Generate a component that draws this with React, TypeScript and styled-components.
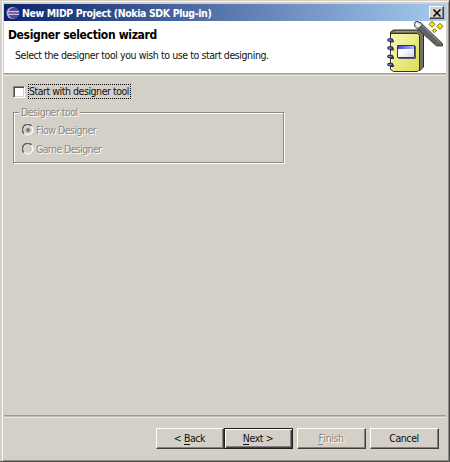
import React from "react";
import styled, { createGlobalStyle, css } from "styled-components";

const GlobalStyle = createGlobalStyle`
  *, *::before, *::after { box-sizing: border-box; }
  body { margin: 0; background: #d4d0c8; }
  button { font: inherit; letter-spacing: inherit; }
`;

const Dialog = styled.main`
  width: 450px;
  height: 462px;
  display: flex;
  flex-direction: column;
  padding: 4px 3px 2px 4px;
  background: #d4d0c8;
  border-right: 1px solid #484744;
  border-bottom: 1px solid #55534f;
  box-shadow: inset 2px 1px #d4d0c8, inset 3px 2px #f8f7f3, inset -1px -1px #8c8984;
  font: 10.5px/14px "DejaVu Sans Condensed", "DejaVu Sans", sans-serif;
  font-stretch: condensed;
  color: #101010;
`;

const Label = styled.span<{ $spacing?: number }>`
  white-space: nowrap;
  letter-spacing: ${(p) => p.$spacing ?? -0.42}px;
`;

const TitleBar = styled.header`
  flex: 0 0 17px;
  display: flex;
  align-items: center;
  padding: 0 2px;
  background: linear-gradient(90deg, #0a246a, #a6caf0);
  color: #fff;
  font-weight: bold;
`;

const AppIcon = styled.svg`
  width: 14px;
  height: 14px;
  margin-right: 2px;
  flex: none;
`;

const CloseButton = styled.button`
  width: 15px;
  height: 13px;
  margin-left: auto;
  padding: 0;
  display: grid;
  place-items: center;
  background: #d4d0c8;
  border: 1px solid;
  border-color: #fff #404040 #404040 #fff;
  box-shadow: inset -1px -1px #808080;
`;

const Banner = styled.section`
  flex: 0 0 52px;
  display: flex;
  justify-content: space-between;
  background: #fff;
`;

const BannerText = styled.div`
  padding: 7px 0 0 4px;
`;

const Heading = styled.h1`
  margin: 0;
  font-size: 12px;
  line-height: 15px;
  font-weight: bold;
  color: #000;
`;

const Description = styled.p`
  margin: 5px 0 0 7px;
`;

const Rule = styled.div`
  flex: 0 0 3px;
  background: linear-gradient(#9d9b97 0 1px, #c2bfb9 1px 2px, #e8e5df 2px);
`;

const Content = styled.section`
  flex: 1;
  padding: 8px 0 0 9px;
`;

const CheckRow = styled.label`
  display: flex;
  align-items: center;
  height: 15px;
`;

const CheckBox = styled.span`
  width: 12px;
  height: 12px;
  background: #fff;
  border: 1px solid;
  border-color: #808080 #fff #fff #808080;
  box-shadow: inset 1px 1px #505050, inset -1px -1px #d4d0c8;
`;

const FocusBox = styled.span`
  display: flex;
  width: 103px;
  height: 15px;
  margin-left: 3px;
  border: 1px dotted #000;
  line-height: 13px;
`;

const disabledText = css`
  color: #8a8782;
  text-shadow: 1px 1px #fff;
`;

const Group = styled.fieldset`
  width: 271px;
  height: 57px;
  min-width: 0;
  margin: 7px 0 0;
  padding: 1px 0 0 8px;
  border: 1px solid #8c8984;
  box-shadow: 1px 1px #fff, inset 1px 1px #fff;
  ${disabledText}
`;

const Legend = styled.legend`
  margin-left: -3px;
  padding: 0 2px;
  height: 13px;
  line-height: 13px;
  background: #d4d0c8;
`;

const RadioRow = styled.label`
  display: flex;
  align-items: center;
  gap: 2px;
  height: 19px;
`;

const RadioIcon = styled.svg`
  width: 12px;
  height: 12px;
`;

const Footer = styled.footer`
  flex: 0 0 41px;
  display: flex;
  justify-content: flex-end;
  align-items: flex-start;
  gap: 4px;
  padding: 10px 7px 0 0;
`;

const ButtonPair = styled.div`
  display: flex;
`;

const PushButton = styled.button<{ $primary?: boolean; $width?: number }>`
  width: ${(p) => p.$width ?? 69}px;
  height: 21px;
  padding: 0 1px 1px 0;
  color: #101010;
  background: #d4d0c8;
  border: 1px solid;
  border-color: ${(p) => (p.$primary ? "#202020" : "#fff #404040 #404040 #fff")};
  box-shadow: ${(p) => (p.$primary
    ? "inset 1px 1px #fff, inset -1px -1px #404040, inset -2px -2px #808080"
    : "inset -1px -1px #808080")};
  &:disabled { ${disabledText} }
`;

const Key = styled.span`
  border-bottom: 1px solid currentColor;
  display: inline-block;
  line-height: 11px;
`;

function EclipseIcon() {
  return (
    <AppIcon viewBox="0 0 14 14">
      <circle cx="6.5" cy="7" r="6" fill="#c4a8c9" />
      <circle cx="8" cy="7" r="5.5" fill="#51489a" />
      <path d="M2 5.5h11M2 8.5h11" stroke="#cdc0dc" />
      <path d="M2.5 7h10.5" stroke="#9184bd" />
    </AppIcon>
  );
}

const BannerArt = styled.svg`
  width: 65px;
  height: 52px;
  flex: none;
`;

function NotebookIcon() {
  return (
    <BannerArt viewBox="381 21 65 52">
      <defs>
        <linearGradient id="cover" x1="0" y1="0" x2="1" y2="1">
          <stop stopColor="#f8f8b8" /><stop offset="1" stopColor="#dcdc54" />
        </linearGradient>
        <linearGradient id="window" x1="0" y1="0" x2="1" y2="0">
          <stop stopColor="#4541db" /><stop offset="1" stopColor="#b3b9ff" />
        </linearGradient>
        <linearGradient id="pane" x1="0" y1="0" x2="1" y2="1">
          <stop offset=".4" stopColor="#fff" /><stop offset="1" stopColor="#ccd0e9" />
        </linearGradient>
      </defs>
      <path d="M390.5 34v-2l3-2h27l3 3v34l-4 4z" fill="#74745f" stroke="#292e20" />
      <path d="M395 31.5h22" stroke="#96977e" />
      <path d="M390.5 33.5h27l2 2v34l-2 2h-24l-3-2z" fill="url(#cover)" stroke="#30331e" />
      <path d="M391.5 35v34" stroke="#ffffe4" />
      {[40, 48, 56.5, 64.5].map((y) => (
        <g key={y}>
          <path d={`M391 ${y + 2}h2.5v-1.5`} fill="none" stroke="#262635" />
          <path d={`M389 ${y}h2.5`} stroke="#20204c" strokeWidth="3.6" strokeLinecap="round" />
          <path d={`M389 ${y}h2`} stroke="#8080d2" strokeWidth="1.7" strokeLinecap="round" />
        </g>
      ))}
      <path d="M397.5 45.5h17v12h-17z" fill="url(#pane)" stroke="#353652" />
      <path d="M398 46h16v3h-16z" fill="url(#window)" />
      <path d="M415.5 46v12.5h-17" fill="none" stroke="#5b5c65" />
      <path d="M420 22l22.5 21.5v2.5h-6l-19-17z" fill="#626262" stroke="#383838" strokeWidth=".8" />
      <path d="M420.5 24l20 19" stroke="#969696" />
      <path d="M415 22l2-.6 4 1.6 1.5 2-5 4-3-3z" fill="#d5d5d5" stroke="#444" />
      <path d="M416 23.5l3.5 3" stroke="#fff" strokeWidth="1.7" />
      {[[432, 24.3, 3], [440, 26.3, 3], [434.5, 30.7, 2]].map(([x, y, r]) => (
        <path key={x} d={`M${x} ${y - r}L${x + r} ${y}L${x} ${y + r}L${x - r} ${y}Z`} fill="#f6e800" stroke="#66600d" strokeWidth=".9" />
      ))}
    </BannerArt>
  );
}

function Radio({ checked = false }: { checked?: boolean }) {
  return (
    <RadioIcon viewBox="0 0 12 12">
      <circle cx="6" cy="6" r="4.8" fill="#d4d0c8" stroke="#fff" strokeWidth="1.3" />
      <path d="M2 9.5A5 5 0 0 1 9.5 2" fill="none" stroke="#666461" strokeWidth="1.7" />
      {checked && <circle cx="6" cy="6" r="1.9" fill="#75736f" />}
    </RadioIcon>
  );
}

export default function App() {
  return (
    <>
      <GlobalStyle />
      <Dialog>
        <TitleBar>
          <EclipseIcon />
          <Label $spacing={-0.39}>New MIDP Project (Nokia SDK Plug-in)</Label>
          <CloseButton aria-label="Close">
            <svg width="8" height="8" viewBox="0 0 8 8"><path d="m.5.5 7 7m0-7-7 7" stroke="#000" strokeWidth="1.5" /></svg>
          </CloseButton>
        </TitleBar>
        <Banner>
          <BannerText>
            <Heading><Label $spacing={-0.34}>Designer selection wizard</Label></Heading>
            <Description><Label>Select the designer tool you wish to use to start designing.</Label></Description>
          </BannerText>
          <NotebookIcon />
        </Banner>
        <Rule />
        <Content>
          <CheckRow>
            <CheckBox />
            <FocusBox><Label $spacing={-0.46}>Start with designer tool</Label></FocusBox>
          </CheckRow>
          <Group disabled>
            <Legend><Label $spacing={-0.5}>Designer tool</Label></Legend>
            <RadioRow><Radio checked /><Label $spacing={-0.52}>Flow Designer</Label></RadioRow>
            <RadioRow><Radio /><Label $spacing={-0.62}>Game Designer</Label></RadioRow>
          </Group>
        </Content>
        <Rule />
        <Footer>
          <ButtonPair>
            <PushButton $width={68}><Label>&lt; <Key>B</Key>ack</Label></PushButton>
            <PushButton $primary><Label><Key>N</Key>ext &gt;</Label></PushButton>
          </ButtonPair>
          <PushButton disabled><Label><Key>F</Key>inish</Label></PushButton>
          <PushButton><Label>Cancel</Label></PushButton>
        </Footer>
      </Dialog>
    </>
  );
}
